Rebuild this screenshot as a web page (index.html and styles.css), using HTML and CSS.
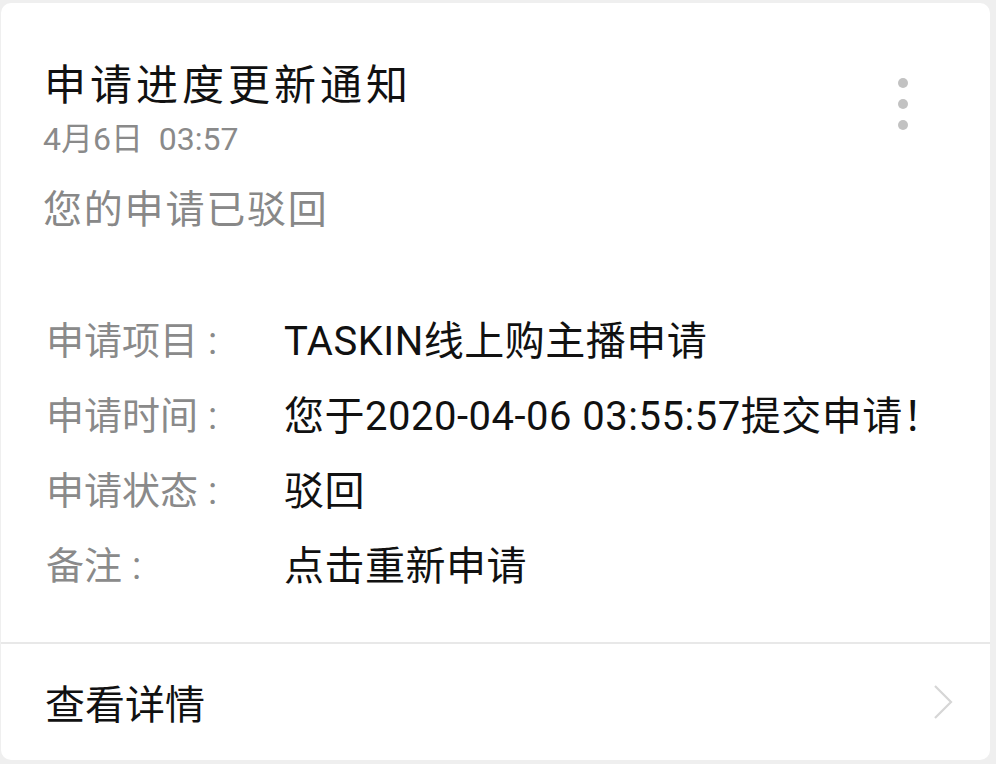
FILE: index.html
```html
<!DOCTYPE html>
<html lang="zh-CN">
<head>
<meta charset="utf-8">
<title>申请进度更新通知</title>
<link rel="stylesheet" href="styles.css">
</head>
<body>
<div class="card">
  <div class="head">
    <div class="head-text">
      <div class="title">申请进度更新通知</div>
      <div class="date">4月6日&nbsp;&nbsp;03:57</div>
    </div>
    <div class="more"><span></span><span></span><span></span></div>
  </div>
  <div class="status">您的申请已驳回</div>
  <div class="fields">
    <div class="label">申请项目<span class="colon">:</span></div><div class="value">TASKIN线上购主播申请</div>
    <div class="label">申请时间<span class="colon">:</span></div><div class="value">您于2020-04-06 03:55:57提交申请！</div>
    <div class="label">申请状态<span class="colon">:</span></div><div class="value">驳回</div>
    <div class="label">备注<span class="colon">:</span></div><div class="value">点击重新申请</div>
  </div>
  <div class="footer">
    <div class="link">查看详情</div>
    <svg class="chev" width="22" height="36" viewBox="0 0 22 36"><path d="M3 2 L19 18 L3 34" fill="none" stroke="#d6d6d6" stroke-width="2.2"/></svg>
  </div>
</div>
</body>
</html>
```
FILE: styles.css
```css
html, body { margin: 0; padding: 0; }
body {
  background: #efefef;
  font-family: Roboto, "Noto Sans CJK SC", sans-serif;
  width: 996px;
  height: 764px;
  overflow: hidden;
}
.card {
  margin: 3px 6px 0 1px;
  height: 757px;
  background: #fff;
  border-radius: 10px;
  display: flex;
  flex-direction: column;
}
.head {
  display: flex;
  justify-content: space-between;
  padding: 55px 0 0 43px;
}
.title {
  font-size: 42px;
  line-height: 56px;
  color: #111;
  letter-spacing: 4px;
}
.date {
  font-size: 32px;
  line-height: 40px;
  color: #8a8a8a;
  margin: 5px 0 0 -1px;
}
.more {
  display: flex;
  flex-direction: column;
  gap: 11px;
  padding: 20px 82px 0 0;
}
.more span {
  width: 10px;
  height: 10px;
  border-radius: 50%;
  background: #c2c2c2;
}
.status {
  padding-left: 42px;
  font-size: 39px;
  line-height: 60px;
  color: #888;
  letter-spacing: 1.8px;
  margin-top: 21px;
}
.fields {
  display: grid;
  grid-template-columns: 238px auto;
  grid-auto-rows: 75px;
  padding-left: 45px;
  margin-top: 60px;
  align-items: center;
}
.label {
  font-size: 38px;
  color: #8a8a8a;
}
.colon {
  margin-left: 10px;
}
.value {
  font-size: 40px;
  letter-spacing: 0.5px;
  color: #111;
}
.footer {
  margin-top: auto;
  border-top: 2px solid #e8e8e8;
  height: 116px;
  display: flex;
  align-items: center;
  justify-content: space-between;
  padding: 0 36px 0 44px;
}
.link {
  font-size: 40px;
  color: #111;
}
.chev { display: block; }
```
